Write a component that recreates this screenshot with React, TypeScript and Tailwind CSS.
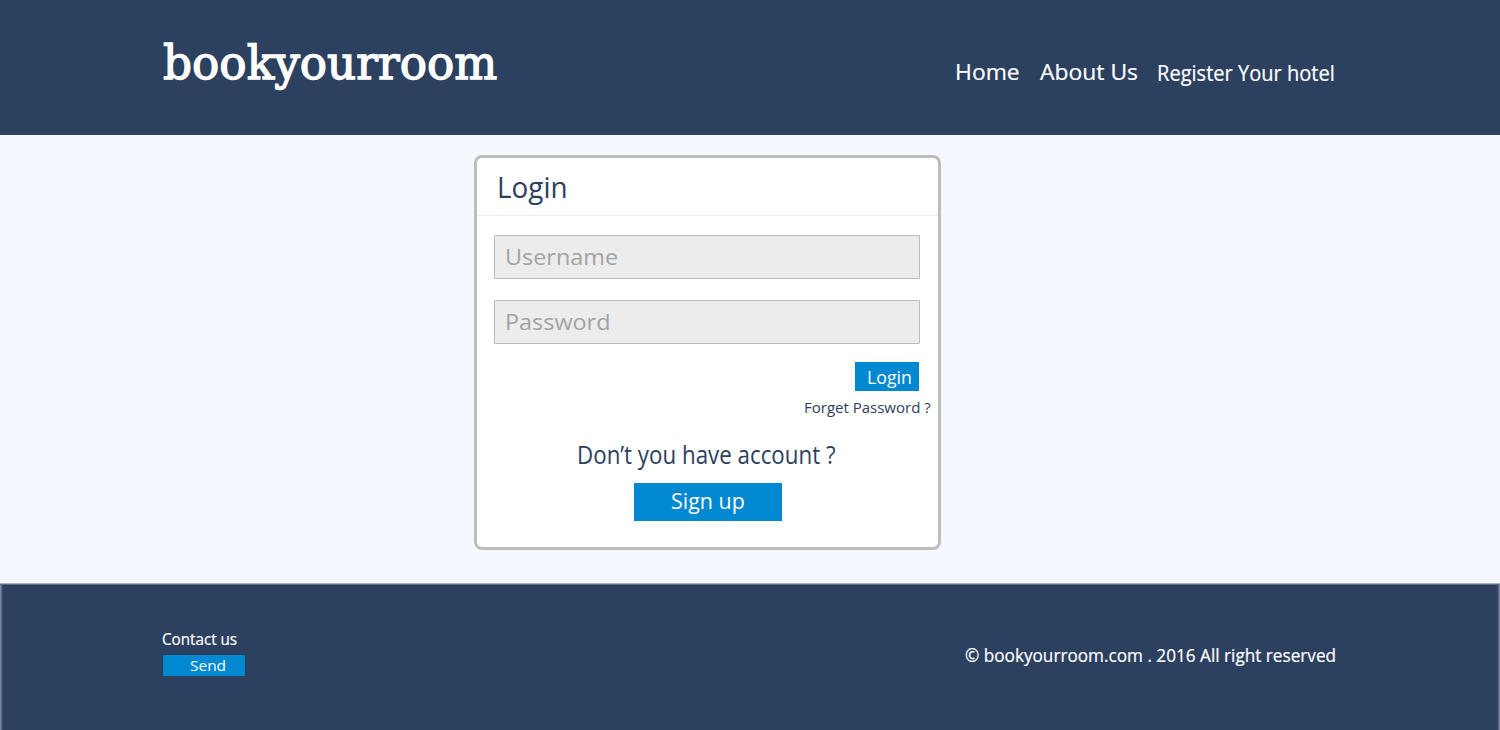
import React from "react";

function Logo() {
  return (
    <a
      href="#"
      className="mt-[33px] ml-px block w-[792px] shrink-0 origin-left scale-x-[0.965] whitespace-nowrap font-['DejaVu_Serif',serif] text-[47px] leading-[60px] [-webkit-text-stroke:1.4px_white]"
    >
      bookyourroom
    </a>
  );
}

function Header() {
  return (
    <header className="flex h-[135px] items-start bg-[#2c4060] pl-[162px] text-white">
      <Logo />
      <nav className="flex items-start whitespace-nowrap leading-[30px] [-webkit-text-stroke:0.2px_white]">
        <a href="#" className="mt-[57px] block w-[85px] origin-left scale-x-[1.09] text-[21px]">
          Home
        </a>
        <a href="#" className="mt-[57px] block w-[117px] origin-left scale-x-[1.09] text-[21px]">
          About Us
        </a>
        <a href="#" className="mt-[58px] block w-[190px] origin-left scale-x-[0.955] text-[21px]">
          Register Your hotel
        </a>
      </nav>
    </header>
  );
}

function Field({ label, type }: { label: string; type: string }) {
  return (
    <label className="flex h-11 w-[426px] items-start overflow-hidden rounded-[1px] border border-[#bababa] bg-[#ececec] pl-[10px]">
      <input
        type={type}
        placeholder={label}
        className="h-10 w-[380px] origin-left scale-x-[1.04] bg-transparent text-[22.5px] text-[#2c4060] outline-none placeholder:text-[#a3a3a3]"
      />
    </label>
  );
}

function LoginCard() {
  return (
    <section className="ml-[474px] h-[395px] w-[467px] rounded-lg border-[3px] border-[#bdbdbd] bg-white text-[#2c4060]">
      <div className="h-[58px] border-b border-[#ebebeb] pt-[9px] pl-5">
        <h1 className="origin-left scale-x-[0.96] text-[29px] leading-10">Login</h1>
      </div>
      <form className="flex flex-col items-start pt-[19px] pl-[17px]">
        <div className="flex flex-col gap-[21px]">
          <Field label="Username" type="text" />
          <Field label="Password" type="password" />
        </div>
        <button
          type="button"
          className="mt-[18px] ml-[361px] h-[29px] w-16 bg-[#0088d1] pl-3 text-left text-[18px] leading-[31px] text-white"
        >
          <span className="block origin-left scale-x-[0.985]">Login</span>
        </button>
        <a href="#" className="mt-1 ml-[310px] block text-[15px] leading-6 whitespace-nowrap">
          Forget Password ?
        </a>
        <p className="mt-[17px] ml-[83px] w-[300px] origin-left scale-x-[0.893] text-[25px] leading-9 whitespace-nowrap">
          Don’t you have account ?
        </p>
        <button
          type="button"
          className="mt-[11px] ml-[140px] flex h-[38px] w-[148px] items-start bg-[#0088d1] pl-[37px] text-[22px] leading-[35px] text-white"
        >
          <span className="block origin-left scale-x-[0.975]">Sign up</span>
        </button>
      </form>
    </section>
  );
}

function Footer() {
  return (
    <footer className="flex h-[147px] items-start bg-[#2c4060] pl-[162px] whitespace-nowrap text-white shadow-[inset_0_1px_0_#a9b3c4,inset_0_2px_0_#5b6a85,inset_1px_0_0_#7b88a0,inset_-1px_0_0_#7b88a0,inset_2px_0_0_#55657f,inset_-2px_0_0_#55657f,inset_3px_0_0_#3a4c6b,inset_-3px_0_0_#3a4c6b]">
      <div className="w-[803px] pt-11">
        <p className="origin-left scale-x-[0.98] text-[15.5px] leading-6 [-webkit-text-stroke:0.2px_white]">
          Contact us
        </p>
        <button
          type="button"
          className="mt-1 ml-px flex h-[21px] w-[82px] bg-[#0088d1] pl-[27px] text-[15px] leading-[21px]"
        >
          <span className="block origin-left scale-x-[1.03]">Send</span>
        </button>
      </div>
      <p className="mt-[59px] w-[400px] origin-left scale-x-[0.928] text-[18.5px] leading-[26px] [-webkit-text-stroke:0.2px_white]">
        © bookyourroom.com . 2016 All right reserved
      </p>
    </footer>
  );
}

export default function App() {
  return (
    <div className="h-[730px] w-[1500px] overflow-hidden bg-[#f5f8ff] font-['Open_Sans','Noto_Sans',sans-serif]">
      <Header />
      <main className="h-[448px] pt-5">
        <LoginCard />
      </main>
      <Footer />
    </div>
  );
}
